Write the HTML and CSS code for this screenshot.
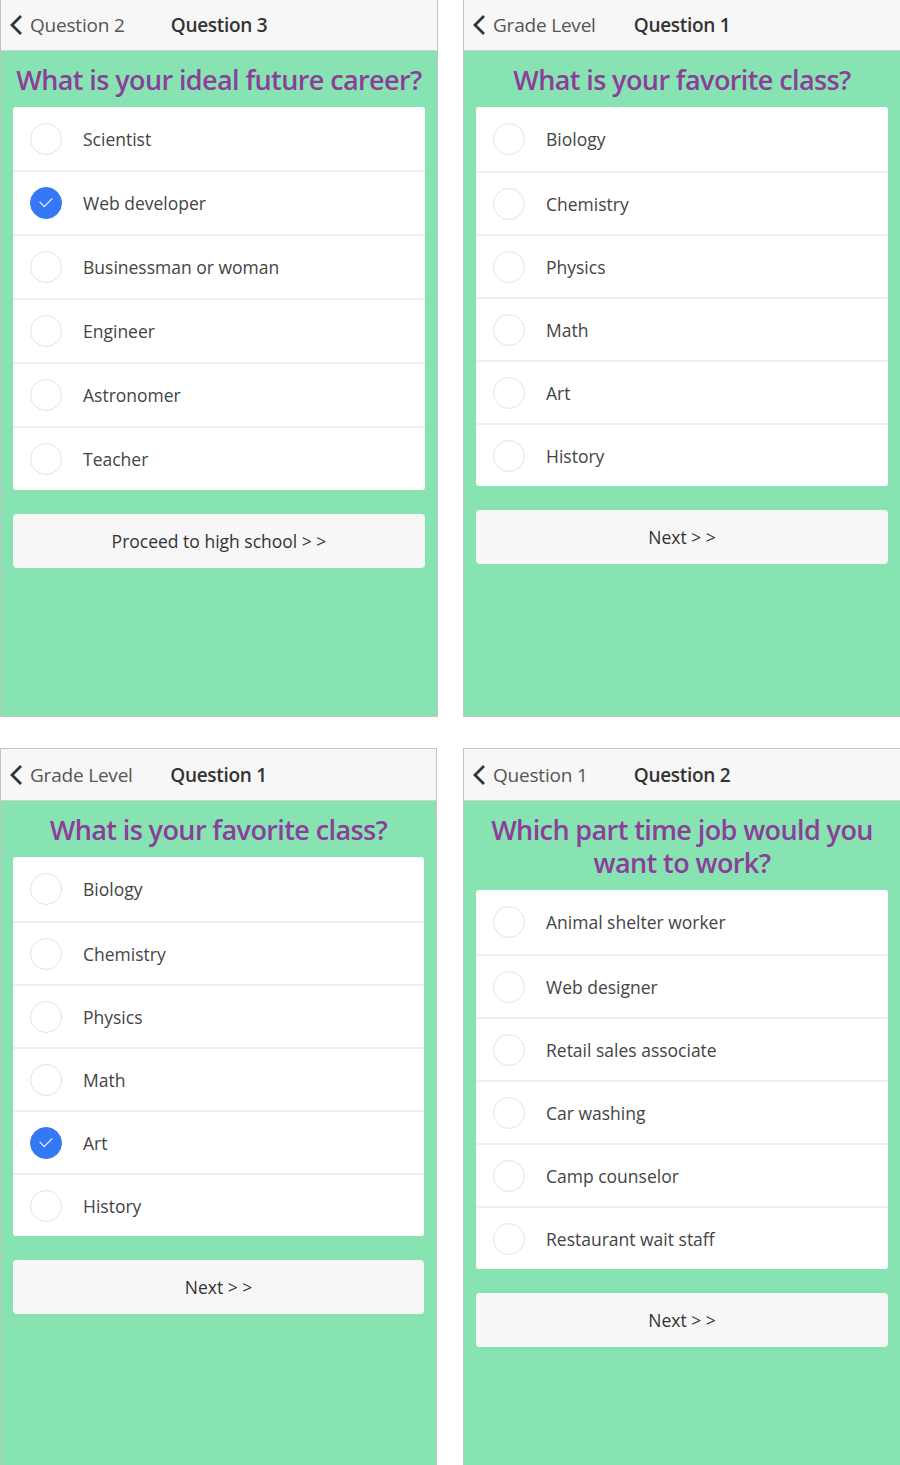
FILE: index.html
```html
<!DOCTYPE html>
<html>
<head>
    <meta charset="UTF-8">
    <meta name="viewport" content="width=device-width, initial-scale=1.0">
    <title>Career Quiz</title>
    <link rel="stylesheet" href="styles.css">
</head>
<body>
    <div class="screens">

        <!-- question 3 -->
        <section class="screen screen-cut">
            <div class="nav">
                <a class="back"><svg class="chevron" viewBox="0 0 14 22"><path d="M12 2 L3 11 L12 20"/></svg>Question 2</a>
                <span class="nav-title">Question 3</span>
            </div>
            <div class="content">
                <h2 class="question">What is your ideal future career?</h2>
                <ul class="options">
                    <li><span class="radio"></span>Scientist</li>
                    <li><span class="radio checked"></span>Web developer</li>
                    <li><span class="radio"></span>Businessman or woman</li>
                    <li><span class="radio"></span>Engineer</li>
                    <li><span class="radio"></span>Astronomer</li>
                    <li><span class="radio"></span>Teacher</li>
                </ul>
                <button class="next">Proceed to high school &gt; &gt;</button>
            </div>
        </section>

        <!-- question 1 -->
        <section class="screen screen-cut">
            <div class="nav">
                <a class="back"><svg class="chevron" viewBox="0 0 14 22"><path d="M12 2 L3 11 L12 20"/></svg>Grade Level</a>
                <span class="nav-title">Question 1</span>
            </div>
            <div class="content">
                <h2 class="question">What is your favorite class?</h2>
                <ul class="options tight">
                    <li><span class="radio"></span>Biology</li>
                    <li><span class="radio"></span>Chemistry</li>
                    <li><span class="radio"></span>Physics</li>
                    <li><span class="radio"></span>Math</li>
                    <li><span class="radio"></span>Art</li>
                    <li><span class="radio"></span>History</li>
                </ul>
                <button class="next">Next &gt; &gt;</button>
            </div>
        </section>

        <!-- question 1, answered -->
        <section class="screen">
            <div class="nav">
                <a class="back"><svg class="chevron" viewBox="0 0 14 22"><path d="M12 2 L3 11 L12 20"/></svg>Grade Level</a>
                <span class="nav-title">Question 1</span>
            </div>
            <div class="content">
                <h2 class="question">What is your favorite class?</h2>
                <ul class="options tight">
                    <li><span class="radio"></span>Biology</li>
                    <li><span class="radio"></span>Chemistry</li>
                    <li><span class="radio"></span>Physics</li>
                    <li><span class="radio"></span>Math</li>
                    <li><span class="radio checked"></span>Art</li>
                    <li><span class="radio"></span>History</li>
                </ul>
                <button class="next">Next &gt; &gt;</button>
            </div>
        </section>

        <!-- question 2 -->
        <section class="screen">
            <div class="nav">
                <a class="back"><svg class="chevron" viewBox="0 0 14 22"><path d="M12 2 L3 11 L12 20"/></svg>Question 1</a>
                <span class="nav-title">Question 2</span>
            </div>
            <div class="content">
                <h2 class="question">Which part time job would you want to work?</h2>
                <ul class="options tight">
                    <li><span class="radio"></span>Animal shelter worker</li>
                    <li><span class="radio"></span>Web designer</li>
                    <li><span class="radio"></span>Retail sales associate</li>
                    <li><span class="radio"></span>Car washing</li>
                    <li><span class="radio"></span>Camp counselor</li>
                    <li><span class="radio"></span>Restaurant wait staff</li>
                </ul>
                <button class="next">Next &gt; &gt;</button>
            </div>
        </section>

    </div>
</body>
</html>
```

FILE: styles.css
```css
body {
    margin: 0;
    background: #fff;
    font-family: 'Segoe UI', 'Open Sans', sans-serif;
    color: #444;
}

.screens {
    display: grid;
    grid-template-columns: 437px 437px;
    grid-template-rows: 717px 717px;
    column-gap: 26px;
    row-gap: 31px;
}

.screen {
    display: flex;
    flex-direction: column;
    border: 1px solid #c4c4c4;
    border-bottom: none;
    overflow: hidden;
}

.screen-cut {
    border-top: none;
    border-bottom: 1px solid #c4c4c4;
}

.screens .screen:nth-child(2),
.screens .screen:nth-child(4) {
    border-right: none;
}

.screens .screen:nth-child(1) {
    width: 436px;
}

.nav {
    height: 51px;
    display: grid;
    grid-template-columns: 1fr auto 1fr;
    align-items: center;
    background: #f7f7f7;
    border-bottom: 1px solid #d2d2d2;
    font-size: 19px;
}

.screen-cut .nav {
    height: 50px;
}

.back {
    display: flex;
    align-items: center;
    padding-left: 8px;
    color: #555;
    letter-spacing: -0.2px;
}

.chevron {
    width: 14px;
    height: 22px;
    margin-right: 7px;
    fill: none;
    stroke: #333;
    stroke-width: 2.8;
}

.nav-title {
    font-weight: 600;
    color: #333;
    letter-spacing: -0.3px;
}

.content {
    flex: 1;
    background: #87e3b2;
    padding: 0 12px;
}

.question {
    margin: 12px 0 11px;
    font-size: 27px;
    line-height: 33px;
    font-weight: 600;
    color: #8b3f9b;
    text-align: center;
    letter-spacing: -0.6px;
}

.options {
    list-style: none;
    margin: 0;
    padding: 0;
    background: #fff;
    border-radius: 3px;
}

.options li {
    display: flex;
    align-items: center;
    height: 62px;
    padding-left: 17px;
    font-size: 17.5px;
    color: #444;
    border-top: 2px solid #efefef;
}

.options.tight li {
    height: 61px;
}

.options li:first-child {
    border-top: none;
    height: 63px;
}

.options.tight li:first-child {
    height: 64px;
}

.radio {
    position: relative;
    width: 30px;
    height: 30px;
    margin-right: 21px;
    border: 1px solid #e4e4e4;
    border-radius: 50%;
    flex-shrink: 0;
}

.radio.checked {
    background: #3478f6;
    border-color: #3478f6;
}

.radio.checked::after {
    content: '';
    position: absolute;
    top: 9px;
    left: 9px;
    width: 11px;
    height: 6px;
    border-left: 1.5px solid #fff;
    border-bottom: 1.5px solid #fff;
    transform: rotate(-45deg);
}

.next {
    display: block;
    width: 100%;
    height: 54px;
    margin-top: 24px;
    border: none;
    border-radius: 4px;
    background: #f7f7f7;
    font-family: inherit;
    font-size: 17.5px;
    color: #333;
}
```
